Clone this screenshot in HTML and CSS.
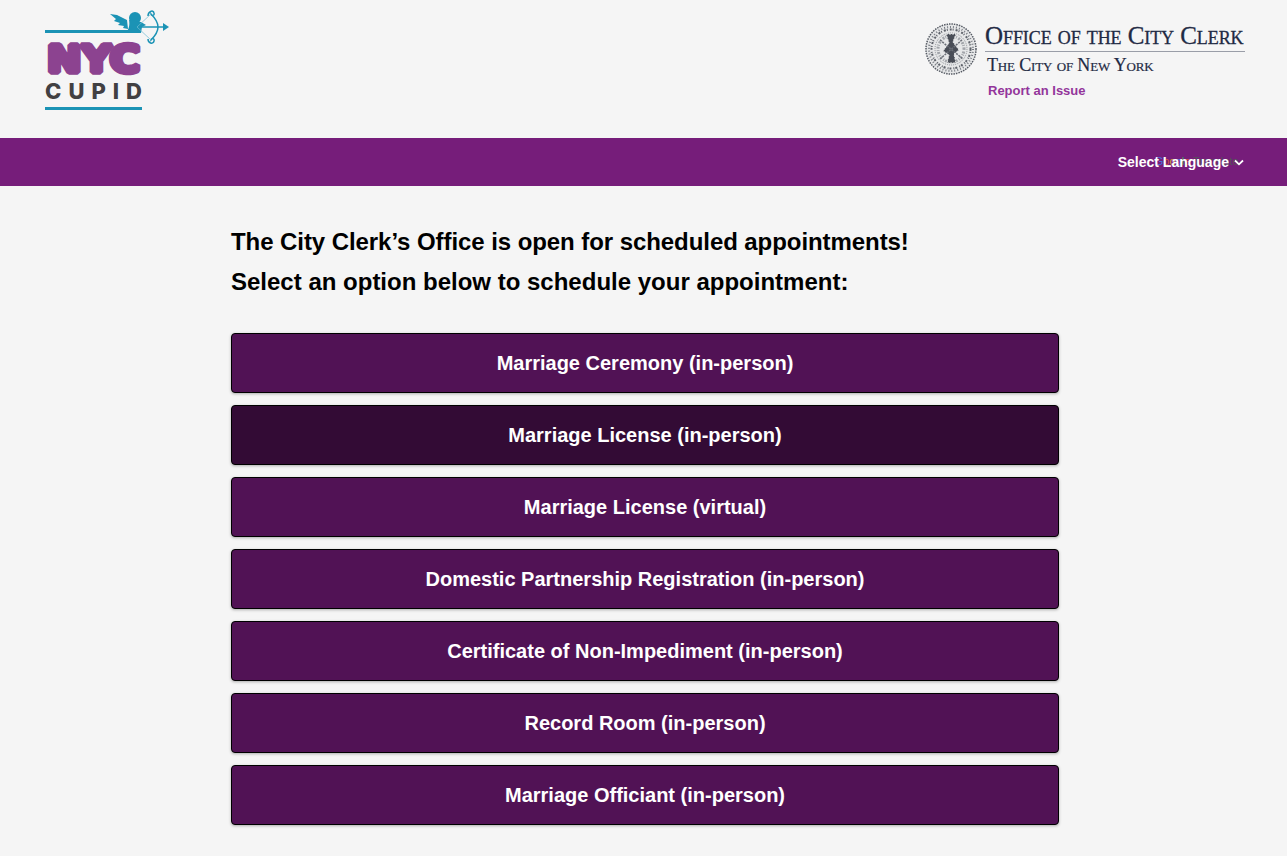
FILE: index.html
```html
<!DOCTYPE html>
<html lang="en">
<head>
<meta charset="utf-8">
<title>NYC Cupid</title>
<link rel="stylesheet" href="styles.css">
</head>
<body>
<header class="site-header">
  <a class="logo" href="#" aria-label="NYC Cupid">
    <svg class="logo-svg" width="126" height="112" viewBox="0 0 126 112">
      <rect x="0" y="30" width="90" height="3" fill="#1b93b5"/>
      <path d="M65 14 L72 15 L82 20 L83 29 L78 28 L79 26 L73 25 L75 23 L69 21 L71 19 Z" fill="#1b93b5"/>
      <circle cx="90" cy="18" r="6" fill="#1b93b5"/>
      <path d="M84 20 L96 22 L101 25 L97 27 L96 33 L80 33 C84 30 85 25 84 20 Z" fill="#1b93b5"/>
      <path d="M103 16 C103 12 108 9 109 13 C110 16 106 16 106 14 C110 18 113 22 113 27 C113 32 110 36 106 40 C106 38 110 38 109 41 C108 45 103 43 103 39" fill="none" stroke="#1b93b5" stroke-width="1.500"/>
      <path d="M106 14 L92 27 L106 40" fill="none" stroke="#6fbcd2" stroke-width="0.700"/>
      <path d="M95 27 H119" stroke="#1b93b5" stroke-width="1.500"/>
      <path d="M118 23 L124 27 L118 31 Z" fill="#1b93b5"/>
      <text class="logo-nyc" x="2" y="71.500" textLength="93" lengthAdjust="spacingAndGlyphs">NYC</text>
      <text class="logo-cupid" x="0" y="99" textLength="97">CUPID</text>
      <rect x="0" y="107" width="97" height="3" fill="#1b93b5"/>
    </svg>
  </a>
  <div class="clerk">
    <svg class="seal" width="52" height="54" viewBox="0 0 52 54">
      <circle cx="26" cy="27" r="25" fill="#e6e7e8" stroke="#555a63" stroke-width="1.500" stroke-dasharray="1.500 1"/>
      <circle cx="26" cy="27" r="22" fill="none" stroke="#777b83" stroke-width="2" stroke-dasharray="1 2"/>
      <circle cx="26" cy="27" r="19.500" fill="none" stroke="#5f636b" stroke-width="2" stroke-dasharray="2 1 1 2"/>
      <circle cx="26" cy="27" r="16" fill="none" stroke="#8c9096" stroke-width="1" stroke-dasharray="1 1"/>
      <circle cx="26" cy="27" r="13" fill="none" stroke="#a2a5aa" stroke-width="3" stroke-dasharray="1 1.500 2 1"/>
      <path d="M21 12 L31 12 L28 20 L34 28 L29 32 L31 41 L22 41 L24 33 L18 29 L24 21 Z" fill="#4a4e57" stroke="#e6e7e8" stroke-width="1" stroke-dasharray="2 1"/>
      <path d="M15 18 L38 37 M37 18 L15 37" stroke="#6b6f77" stroke-width="1.500" stroke-dasharray="2 1"/>
    </svg>
    <div class="clerk-text">
      <div class="clerk-title">Office of the City Clerk</div>
      <div class="clerk-sub">The City of New York</div>
      <a class="report" href="#">Report an Issue</a>
    </div>
  </div>
</header>
<nav class="lang-bar">
  <div class="lang-wrap">
    <span class="gt"><span class="gt-b">G</span><span class="gt-r">o</span><span class="gt-y">o</span><span class="gt-b">g</span><span class="gt-g">l</span><span class="gt-r">e</span> <span class="gt-d">Translate</span></span>
    <button class="lang" type="button">
      <span>Select Language</span>
      <svg width="10" height="7" viewBox="0 0 10 7"><path d="M1 1.500 L5 5.300 L9 1.500" fill="none" stroke="#fff" stroke-width="1.800"/></svg>
    </button>
  </div>
</nav>
<main class="content">
  <h1 class="lead lead-first">The City Clerk’s Office is open for scheduled appointments!</h1>
  <h2 class="lead">Select an option below to schedule your appointment:</h2>
  <div class="options">
    <a class="option" href="#">Marriage Ceremony (in-person)</a>
    <a class="option active" href="#">Marriage License (in-person)</a>
    <a class="option" href="#">Marriage License (virtual)</a>
    <a class="option" href="#">Domestic Partnership Registration (in-person)</a>
    <a class="option" href="#">Certificate of Non-Impediment (in-person)</a>
    <a class="option" href="#">Record Room (in-person)</a>
    <a class="option" href="#">Marriage Officiant (in-person)</a>
  </div>
</main>
</body>
</html>
```
FILE: styles.css
```css
* { box-sizing: border-box; }
html, body { margin: 0; height: 100%; }
body {
  background: #f5f5f5;
  color: #000;
  font-family: "Liberation Sans", Arial, sans-serif;
  overflow: hidden;
}
.site-header {
  height: 138px;
  display: flex;
  justify-content: space-between;
  align-items: flex-start;
  padding: 0 42px 0 45px;
}
.logo { display: block; }
.logo-svg { display: block; overflow: visible; }
.logo-nyc {
  font-family: "DejaVu Sans", sans-serif;
  font-weight: 700;
  font-size: 38px;
  fill: #8c4390;
  stroke: #8c4390;
  stroke-width: 5.500;
  stroke-linejoin: bevel;
}
.logo-cupid {
  font-family: Inter, sans-serif;
  font-weight: 800;
  font-size: 22px;
  fill: #414042;
}
.clerk { display: flex; align-items: flex-start; gap: 8px; padding-top: 22px; }
.seal { display: block; }
.clerk-text { width: 260px; }
.clerk-title {
  font-family: "Liberation Serif", serif;
  font-variant: small-caps;
  font-size: 25px;
  letter-spacing: -0.08px;
  line-height: 28px;
  height: 30px;
  color: #1f2a44;
  white-space: nowrap;
  border-bottom: 1px solid #9a9ea8;
  -webkit-text-stroke: 0.3px #1f2a44;
}
.clerk-sub {
  margin-top: 1px;
  padding-left: 2px;
  font-family: "Liberation Serif", serif;
  font-variant: small-caps;
  font-size: 18px;
  letter-spacing: -0.15px;
  line-height: 24px;
  color: #1f2a44;
  white-space: nowrap;
  -webkit-text-stroke: 0.2px #1f2a44;
}
.report {
  display: block;
  margin-top: 6px;
  padding-left: 3px;
  font-size: 13px;
  font-weight: 700;
  line-height: 16px;
  color: #93359b;
  text-decoration: none;
}
.lang-bar {
  height: 48px;
  background: #761d7a;
  display: flex;
  justify-content: flex-end;
  align-items: center;
  padding-right: 43px;
}
.lang-wrap { position: relative; }
.gt {
  position: absolute;
  left: 37px;
  top: 0;
  font-size: 11px;
  line-height: 15px;
  white-space: nowrap;
}
.gt-b { color: #4a6fd8; }
.gt-r { color: #d9503f; }
.gt-y { color: #d8a83a; }
.gt-g { color: #3f9a58; }
.gt-d { color: #55505a; }
.lang {
  position: relative;
  display: flex;
  align-items: center;
  gap: 5px;
  background: none;
  border: 0;
  padding: 0;
  color: #fff;
  font: 700 14px "Liberation Sans", Arial, sans-serif;
}
.content { padding: 41px 0 0 231px; width: 1059px; }
.lead {
  margin: 0 0 10px;
  font-size: 24px;
  font-weight: 700;
  line-height: 30px;
  white-space: nowrap;
}
.lead-first { letter-spacing: -0.07px; }
.options { display: flex; flex-direction: column; gap: 12px; margin-top: 36px; }
.option {
  height: 60px;
  display: flex;
  align-items: center;
  justify-content: center;
  background: #511255;
  border: 1px solid #000;
  border-radius: 4px;
  box-shadow: 0 1px 3px rgba(0, 0, 0, 0.3);
  color: #fff;
  font-size: 20px;
  font-weight: 700;
  text-decoration: none;
}
.option.active { background: #330b35; }
```
